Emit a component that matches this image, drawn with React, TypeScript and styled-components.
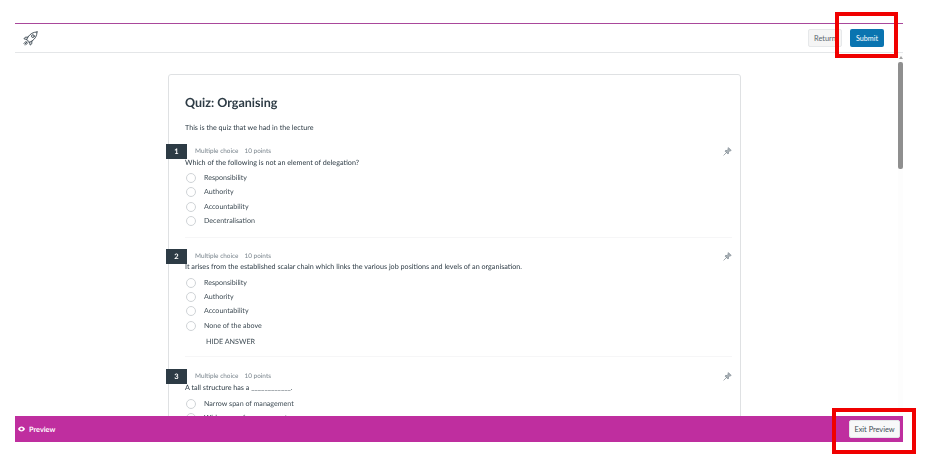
import React from "react";
import styled, { createGlobalStyle } from "styled-components";

const Global = createGlobalStyle`
  html, body { margin: 0; padding: 0; background: #fff; }
  body { font-family: Lato, "Liberation Sans", sans-serif; color: #2d3b45; overflow: hidden; text-rendering: geometricPrecision; }
`;

const Page = styled.div`
  position: relative;
  width: 933px;
  height: 465px;
  padding: 23px 30px 0 15px;
  box-sizing: border-box;
  background: #fff;
`;

const Frame = styled.div`
  display: flex;
  flex-direction: column;
  height: 418px;
  border-top: 1px solid #a9479b;
`;

const Header = styled.header`
  flex: none;
  height: 28px;
  display: flex;
  align-items: center;
  justify-content: space-between;
  padding: 0 19px 0 8px;
  border-bottom: 1px solid #e4e6e8;
`;

const Actions = styled.div`
  display: flex;
  align-items: center;
  gap: 0;
`;

const ReturnButton = styled.button`
  width: 34px;
  height: 18px;
  margin-right: 8px;
  padding: 0 0 0 5px;
  border: 1px solid #e6e8ea;
  border-radius: 2px;
  background: #f5f5f5;
  color: #5b6770;
  font: 400 7.4px Lato, sans-serif;
  text-align: left;
  overflow: hidden;
  white-space: nowrap;
`;

const SubmitButton = styled.button`
  width: 34px;
  height: 18px;
  padding: 0;
  border: 0;
  border-radius: 2px;
  background: #0a74b0;
  color: #fff;
  font: 400 7.2px Lato, sans-serif;
`;

const Scroller = styled.div`
  flex: 1;
  min-height: 0;
  display: flex;
  overflow: hidden;
`;

const Content = styled.main`
  flex: 1;
  min-width: 0;
  padding-top: 21px;
  padding-left: 153px;
`;

const Card = styled.section`
  box-sizing: border-box;
  width: 573px;
  height: 420px;
  padding: 19px 0 0 16px;
  border: 1px solid #dfe1e3;
  border-radius: 3px;
  will-change: transform;
`;

const Title = styled.h1`
  margin: 0;
  font: 700 12.5px/18px Lato, sans-serif;
  color: #2d3b45;
`;

const Intro = styled.p`
  margin: 10px 0 0;
  font: 400 7.15px/12px Lato, sans-serif;
  color: #2d3b45;
`;

const Question = styled.article<{ $top: number; $pad: number; $rule?: boolean }>`
  position: relative;
  margin-top: ${(p) => p.$top}px;
  padding-bottom: ${(p) => p.$pad}px;
  margin-right: 8px;
  border-bottom: ${(p) => (p.$rule ? "1px solid #f6f6f7" : "0")};
`;

const QuestionHead = styled.div`
  height: 15px;
  display: flex;
  align-items: center;
  justify-content: space-between;
  margin-left: -19px;
`;

const HeadLeft = styled.div`
  display: flex;
  align-items: center;
`;

const Badge = styled.span`
  width: 21px;
  height: 15px;
  display: flex;
  align-items: center;
  justify-content: center;
  background: #2d3b45;
  color: #fff;
  font: 700 7.5px Lato, sans-serif;
`;

const Meta = styled.span`
  margin-left: 8px;
  font: 400 6.45px Lato, sans-serif;
  color: #7a858d;
  & + & { margin-left: 6px; }
`;

const Pin = styled.svg`
  width: 9px;
  height: 9px;
`;

const Prompt = styled.div`
  font: 400 7.2px/10px Lato, sans-serif;
  color: #2d3b45;
  margin-top: -1.5px;
`;

const Options = styled.ul`
  list-style: none;
  margin: 3px 0 0;
  padding: 0;
`;

const Option = styled.li`
  height: 14.3px;
  display: flex;
  align-items: center;
  font: 400 7.1px Lato, sans-serif;
  color: #3f4c55;
`;

const Radio = styled.span`
  flex: none;
  box-sizing: border-box;
  width: 10px;
  height: 10px;
  margin: 1px 8px 0 1px;
  border: 1px solid #cfd3d6;
  border-radius: 50%;
  background: #fff;
`;

const HideAnswer = styled.div`
  margin: 5px 0 0 21px;
  font: 400 7.2px/10px Lato, sans-serif;
  color: #3f4c55;
`;

const Track = styled.div`
  flex: none;
  width: 5px;
  display: flex;
  flex-direction: column;
  align-items: center;
  background: #fdfdfd;
`;

const Arrow = styled.div`
  margin-top: 3px;
  width: 0;
  height: 0;
  border-left: 2.5px solid transparent;
  border-right: 2.5px solid transparent;
  border-bottom: 3px solid #a3a3a3;
`;

const Thumb = styled.div`
  width: 5px;
  height: 107px;
  margin-top: 3px;
  border-radius: 2px;
  background: #8f8f8f;
`;

const Footer = styled.footer`
  flex: none;
  height: 26px;
  display: flex;
  align-items: center;
  justify-content: space-between;
  padding: 0 3px 0 3px;
  background: #bf2e9f;
  color: #fff;
`;

const PreviewLabel = styled.div`
  display: flex;
  align-items: center;
  gap: 4px;
  font: 700 7.3px Lato, sans-serif;
`;

const ExitButton = styled.button`
  width: 51px;
  height: 18px;
  padding: 0;
  border: 1px solid #e3e5e7;
  border-radius: 2px;
  background: #f8f8f9;
  color: #3f4c55;
  font: 400 7.4px Lato, sans-serif;
`;

const Callout = styled.div<{ $x: number; $y: number; $w: number; $h: number }>`
  position: absolute;
  left: ${(p) => p.$x}px;
  top: ${(p) => p.$y}px;
  width: ${(p) => p.$w}px;
  height: ${(p) => p.$h}px;
  box-sizing: border-box;
  border: 4px solid #f00000;
`;

const PinIcon = () => (
  <Pin viewBox="0 0 16 16" fill="#aab2b7" stroke="#76818a" strokeWidth="1.200" strokeLinejoin="round" strokeLinecap="round" aria-hidden>
    <path d="M10 1.500 14.500 6 13.300 6.800 12.300 6.500 9.800 9 9.800 11.500 8.800 12.500 3.500 7.200 4.500 6.200 7 6.200 9.500 3.700 9.200 2.700Z" />
    <path d="M6 10 1.500 14.500" fill="none" />
  </Pin>
);

const Rocket = () => (
  <svg width="15" height="15" viewBox="0 0 24 24" fill="none" stroke="#3f4b54" strokeWidth="1.500" strokeLinejoin="round" strokeLinecap="round" aria-hidden>
    <path d="M22.500 1.500C16 1.800 11.500 4.500 7.800 9.800L6 13.500l4.500 4.500 3.700-1.800C19.500 12.500 22.200 8 22.500 1.500Z" />
    <path d="M7.800 9.800 3.500 10 1.500 12.500l4.500 1M14.200 16.200 14 20.500 11.500 22.500l-1-4.500" />
    <circle cx="15.800" cy="8.200" r="2.200" />
    <path d="M5.500 16 1.500 20M8 18.500l-4 4M6.500 17.500 3 21" />
  </svg>
);

const Eye = () => (
  <svg width="7" height="6" viewBox="0 0 14 10" aria-hidden>
    <path fillRule="evenodd" fill="#fff" d="M7 0c3.200 0 5.700 2 7 5-1.300 3-3.800 5-7 5S1.300 8 0 5c1.300-3 3.800-5 7-5Zm0 2.500a2.500 2.500 0 1 0 0 5 2.500 2.500 0 0 0 0-5Z" />
  </svg>
);

type Q = { n: number; text: string; options: string[]; hide?: boolean; top: number; pad: number; rule?: boolean };

const questions: Q[] = [
  { n: 1, text: "Which of the following is not an element of delegation?", options: ["Responsibility", "Authority", "Accountability", "Decentralisation"], top: 10, pad: 9, rule: true },
  { n: 2, text: "It arises from the established scalar chain which links the various job positions and levels of an organisation.", options: ["Responsibility", "Authority", "Accountability", "None of the above"], hide: true, top: 11, pad: 9, rule: true },
  { n: 3, text: "A tall structure has a ____________.", options: ["Narrow span of management", "Wide span of management"], top: 12, pad: 0 },
];

export default function App() {
  return (
    <Page>
      <Global />
      <Frame>
        <Header>
          <Rocket />
          <Actions>
            <ReturnButton>Return</ReturnButton>
            <SubmitButton>Submit</SubmitButton>
          </Actions>
        </Header>
        <Scroller>
          <Content>
            <Card>
              <Title>Quiz: Organising</Title>
              <Intro>This is the quiz that we had in the lecture</Intro>
              {questions.map((q) => (
                <Question key={q.n} $top={q.top} $pad={q.pad} $rule={q.rule}>
                  <QuestionHead>
                    <HeadLeft>
                      <Badge>{q.n}</Badge>
                      <Meta>Multiple choice</Meta>
                      <Meta>10 points</Meta>
                    </HeadLeft>
                    <PinIcon />
                  </QuestionHead>
                  <Prompt>{q.text}</Prompt>
                  <Options>
                    {q.options.map((o) => (
                      <Option key={o}>
                        <Radio />
                        {o}
                      </Option>
                    ))}
                  </Options>
                  {q.hide && <HideAnswer>HIDE ANSWER</HideAnswer>}
                </Question>
              ))}
            </Card>
          </Content>
          <Track>
            <Arrow />
            <Thumb />
          </Track>
        </Scroller>
        <Footer>
          <PreviewLabel>
            <Eye />
            Preview
          </PreviewLabel>
          <ExitButton>Exit Preview</ExitButton>
        </Footer>
      </Frame>
      <Callout $x={835} $y={12} $w={63} $h={46} />
      <Callout $x={832} $y={408} $w={84} $h={46} />
    </Page>
  );
}
